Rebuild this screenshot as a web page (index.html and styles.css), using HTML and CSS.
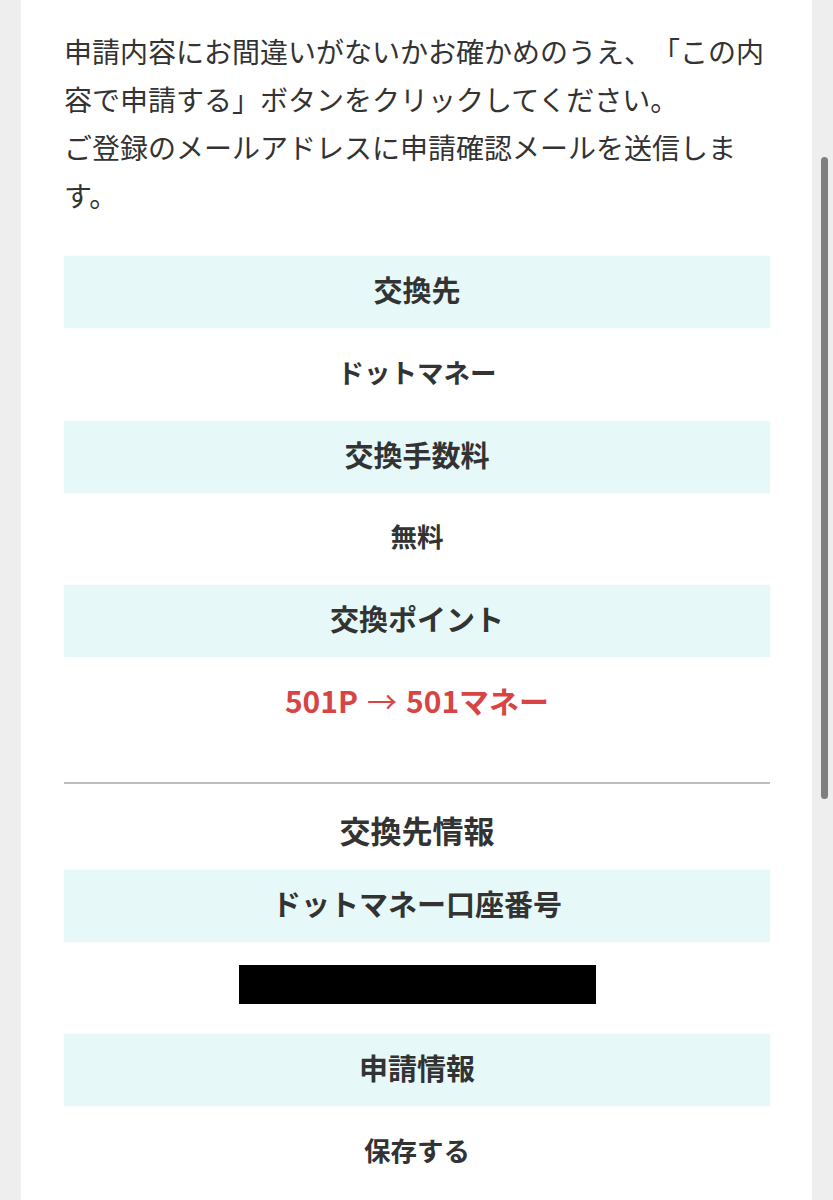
FILE: index.html
```html
<!DOCTYPE html>
<html lang="ja">
<head>
<meta charset="utf-8">
<title>申請内容の確認</title>
<link rel="stylesheet" href="styles.css">
</head>
<body>
<div class="page">
  <main class="sheet">
    <p class="intro">申請内容にお間違いがないかお確かめのうえ、「この内容で申請する」ボタンをクリックしてください。<br>ご登録のメールアドレスに申請確認メールを送信します。</p>

    <section class="group">
      <h3 class="label">交換先</h3>
      <div class="value">ドットマネー</div>
      <h3 class="label">交換手数料</h3>
      <div class="value">無料</div>
      <h3 class="label">交換ポイント</h3>
      <div class="value value-red">501P<span class="arrow">→</span>501マネー</div>
    </section>

    <hr class="divider">

    <section class="group">
      <h2 class="section-title">交換先情報</h2>
      <h3 class="label">ドットマネー口座番号</h3>
      <div class="value value-masked"><span class="mask"></span></div>
      <h3 class="label">申請情報</h3>
      <div class="value">保存する</div>
    </section>
  </main>
  <div class="scrollbar"></div>
</div>
</body>
</html>
```

FILE: styles.css
```css
* {
  box-sizing: border-box;
}

html, body {
  margin: 0;
  padding: 0;
}

body {
  background: #eeeeee;
  font-family: "Noto Sans CJK JP", "Noto Sans", sans-serif;
  color: #333333;
  text-spacing-trim: space-all;
}

.page {
  position: relative;
  width: 833px;
  height: 1200px;
  overflow: hidden;
  padding-left: 21px;
}

.sheet {
  width: 791px;
  min-height: 1200px;
  background: #ffffff;
  padding: 27px 42px 0 43px;
}

.intro {
  margin: 0;
  font-size: 28px;
  line-height: 48px;
  font-weight: 400;
  color: #333333;
}

.group {
  display: flex;
  flex-direction: column;
}

.group:first-of-type {
  margin-top: 37px;
}

.label {
  margin: 0;
  height: 72px;
  padding-bottom: 6px;
  display: flex;
  align-items: center;
  justify-content: center;
  background: #e6f9f8;
  box-shadow: 0 0 4px rgba(0, 0, 0, 0.03);
  font-size: 29px;
  font-weight: 700;
  color: #333333;
}

.value {
  height: 92.5px;
  padding-bottom: 6px;
  display: flex;
  align-items: center;
  justify-content: center;
  font-size: 26.5px;
  font-weight: 700;
  color: #333333;
}

.value-red {
  color: #d84444;
  font-size: 30px;
}

.arrow {
  font-weight: 400;
  margin: 0 9px;
}

.value-masked {
  align-items: flex-start;
  padding-top: 23px;
  padding-bottom: 0;
}

.mask {
  display: block;
  width: 357px;
  height: 39px;
  background: #000000;
}

.divider {
  margin: 32px 0 0 0;
  border: 0;
  height: 2px;
  background: #bdbdbd;
}

.section-title {
  margin: 0;
  padding: 22px 0 16px;
  line-height: 48px;
  text-align: center;
  font-size: 31px;
  font-weight: 700;
  color: #333333;
}

.scrollbar {
  position: absolute;
  left: 821px;
  top: 157px;
  width: 7px;
  height: 642px;
  border-radius: 4px;
  background: #7f7f7f;
}
```
